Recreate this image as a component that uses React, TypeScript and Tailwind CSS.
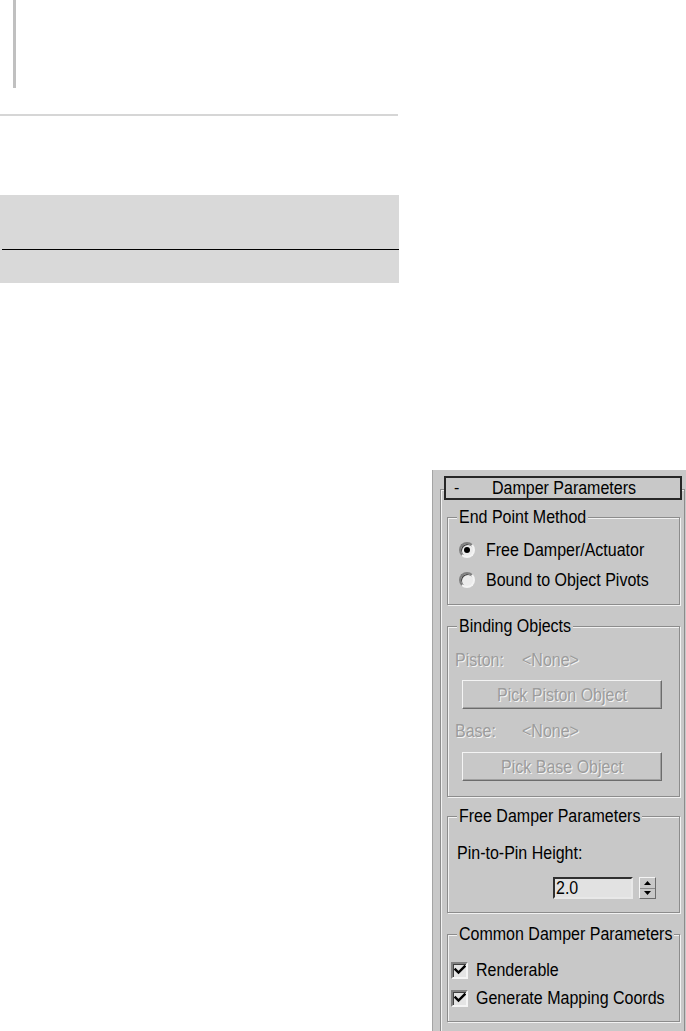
import React from "react";

const font = { fontFamily: '"Liberation Sans", Arial, sans-serif' };

const etched =
  "border border-[#8c8c8c] shadow-[inset_1px_1px_0_#f2f2f2,1px_1px_0_#f2f2f2]";

function T({ children, className = "" }: { children: React.ReactNode; className?: string }) {
  return (
    <span className={`inline-block whitespace-nowrap [transform:scaleY(1.13)] ${className}`}>
      {children}
    </span>
  );
}

function Legend({ children }: { children: React.ReactNode }) {
  return (
    <div className="absolute left-[9px] top-[-11px] px-[2px] bg-[#c8c8c8] leading-[20px] text-black whitespace-nowrap">
      <T>{children}</T>
    </div>
  );
}

function Radio({ checked }: { checked?: boolean }) {
  return (
    <div className="w-[16px] h-[16px] shrink-0 rounded-full border-2 border-t-[#808080] border-l-[#808080] border-r-[#f4f4f4] border-b-[#f4f4f4] bg-[#ececec] flex items-center justify-center shadow-[inset_1px_1px_0_#404040]">
      {checked && <div className="w-[6px] h-[6px] rounded-full bg-black" />}
    </div>
  );
}

function Check() {
  return (
    <div className="w-[17px] h-[17px] shrink-0 border-2 border-t-[#808080] border-l-[#808080] border-r-[#f4f4f4] border-b-[#f4f4f4] bg-[#e4e4e4] shadow-[inset_1px_1px_0_#404040] flex items-center justify-center">
      <svg width="12" height="12" viewBox="0 0 12 12">
        <polyline
          points="1.5,5.5 4.5,8.5 10.5,2.5"
          fill="none"
          stroke="#000"
          strokeWidth="2.4"
          strokeLinecap="square"
        />
      </svg>
    </div>
  );
}

const disabledText = "text-[#9c9c9c] [text-shadow:1px_1px_0_#f4f4f4]";

function DisabledButton({ children }: { children: React.ReactNode }) {
  return (
    <div className="ml-[7px] w-[200px] h-[29px] border border-t-[#f4f4f4] border-l-[#f4f4f4] border-r-[#6c6c6c] border-b-[#6c6c6c] shadow-[inset_-1px_-1px_0_#a0a0a0] flex items-center justify-center leading-[20px]">
      <T className={disabledText}>{children}</T>
    </div>
  );
}

export default function App() {
  return (
    <div
      className="w-[686px] h-[1031px] bg-white flex overflow-hidden text-[16px] text-black"
      style={font}
    >
      {/* left column */}
      <div className="w-[432px] shrink-0">
        <div className="ml-[13px] h-[88px] w-[3px] bg-[#c0c0c0]" />
        <div className="mt-[26px] h-[2px] w-[398px] bg-[#d6d6d6]" />
        <div className="mt-[79px] w-[399px] h-[88px] bg-[#d9d9d9]">
          <div className="h-[54px]" />
          <div className="ml-[2px] h-[1px] bg-black" />
        </div>
      </div>

      {/* right panel */}
      <div className="flex-1 pt-[470px]">
        <div className="h-[561px] bg-[#c8c8c8] border-l border-[#a4a4a4] pt-[19px] pl-[7px] pr-[1px]">
          {/* rollout frame */}
          <div className="h-[560px] border-t border-l border-r border-[#8c8c8c] shadow-[inset_1px_1px_0_#f2f2f2]">
            {/* header */}
            <div className="relative -mt-[14px] ml-[3px] mr-[2px] h-[24px] border-2 border-[#262626] bg-[#c8c8c8] flex items-center justify-center leading-[20px]">
              <span className="absolute left-[8px] top-[0px]">-</span>
              <T className="pl-[2px]">Damper Parameters</T>
            </div>

            {/* End Point Method */}
            <div className={`relative ${etched} mt-[17px] ml-[6px] mr-[4px] h-[88px] pt-[22px] pl-[11px]`}>
              <Legend>End Point Method</Legend>
              <div className="h-[20px] flex items-center">
                <Radio checked />
                <T className="ml-[11px] leading-[20px]">Free Damper/Actuator</T>
              </div>
              <div className="mt-[10px] h-[20px] flex items-center">
                <Radio />
                <T className="ml-[11px] leading-[20px]">Bound to Object Pivots</T>
              </div>
            </div>

            {/* Binding Objects */}
            <div className={`relative ${etched} mt-[21px] ml-[6px] mr-[4px] h-[171px] pt-[23px] pl-[7px]`}>
              <Legend>Binding Objects</Legend>
              <div className="h-[20px] flex items-center leading-[20px]">
                <T className={`w-[67px] ${disabledText}`}>Piston:</T>
                <T className={disabledText}>&lt;None&gt;</T>
              </div>
              <div className="mt-[10px]">
                <DisabledButton>Pick Piston Object</DisabledButton>
              </div>
              <div className="mt-[12px] h-[20px] flex items-center leading-[20px]">
                <T className={`w-[67px] ${disabledText}`}>Base:</T>
                <T className={disabledText}>&lt;None&gt;</T>
              </div>
              <div className="mt-[11px]">
                <DisabledButton>Pick Base Object</DisabledButton>
              </div>
            </div>

            {/* Free Damper Parameters */}
            <div className={`relative ${etched} mt-[19px] ml-[6px] mr-[4px] h-[97px] pt-[26px] pl-[9px]`}>
              <Legend>Free Damper Parameters</Legend>
              <div className="h-[20px] leading-[20px]">
                <T>Pin-to-Pin Height:</T>
              </div>
              <div className="mt-[14px] ml-[96px] flex items-start">
                <div className="w-[80px] h-[22px] bg-[#e2e2e2] border-2 border-t-[#303030] border-l-[#303030] border-r-[#e8e8e8] border-b-[#e8e8e8] pl-[1px] leading-[18px]">
                  <T>2.0</T>
                </div>
                <div className="ml-[6px] w-[17px] h-[22px] border border-t-[#f4f4f4] border-l-[#f4f4f4] border-r-[#6c6c6c] border-b-[#6c6c6c] flex flex-col">
                  <div className="flex-1 flex items-center justify-center border-b border-[#8a8a8a]">
                    <svg width="7" height="4" viewBox="0 0 7 4">
                      <polygon points="3.5,0 7,4 0,4" fill="#000" />
                    </svg>
                  </div>
                  <div className="flex-1 flex items-center justify-center">
                    <svg width="7" height="4" viewBox="0 0 7 4">
                      <polygon points="0,0 7,0 3.5,4" fill="#000" />
                    </svg>
                  </div>
                </div>
              </div>
            </div>

            {/* Common Damper Parameters */}
            <div className={`relative ${etched} mt-[21px] ml-[6px] mr-[4px] h-[88px] pt-[25px] pl-[3px]`}>
              <Legend>Common Damper Parameters</Legend>
              <div className="h-[20px] flex items-center">
                <Check />
                <T className="ml-[8px] leading-[20px]">Renderable</T>
              </div>
              <div className="mt-[8px] h-[20px] flex items-center">
                <Check />
                <T className="ml-[8px] leading-[20px]">Generate Mapping Coords</T>
              </div>
            </div>
          </div>
        </div>
      </div>
    </div>
  );
}
